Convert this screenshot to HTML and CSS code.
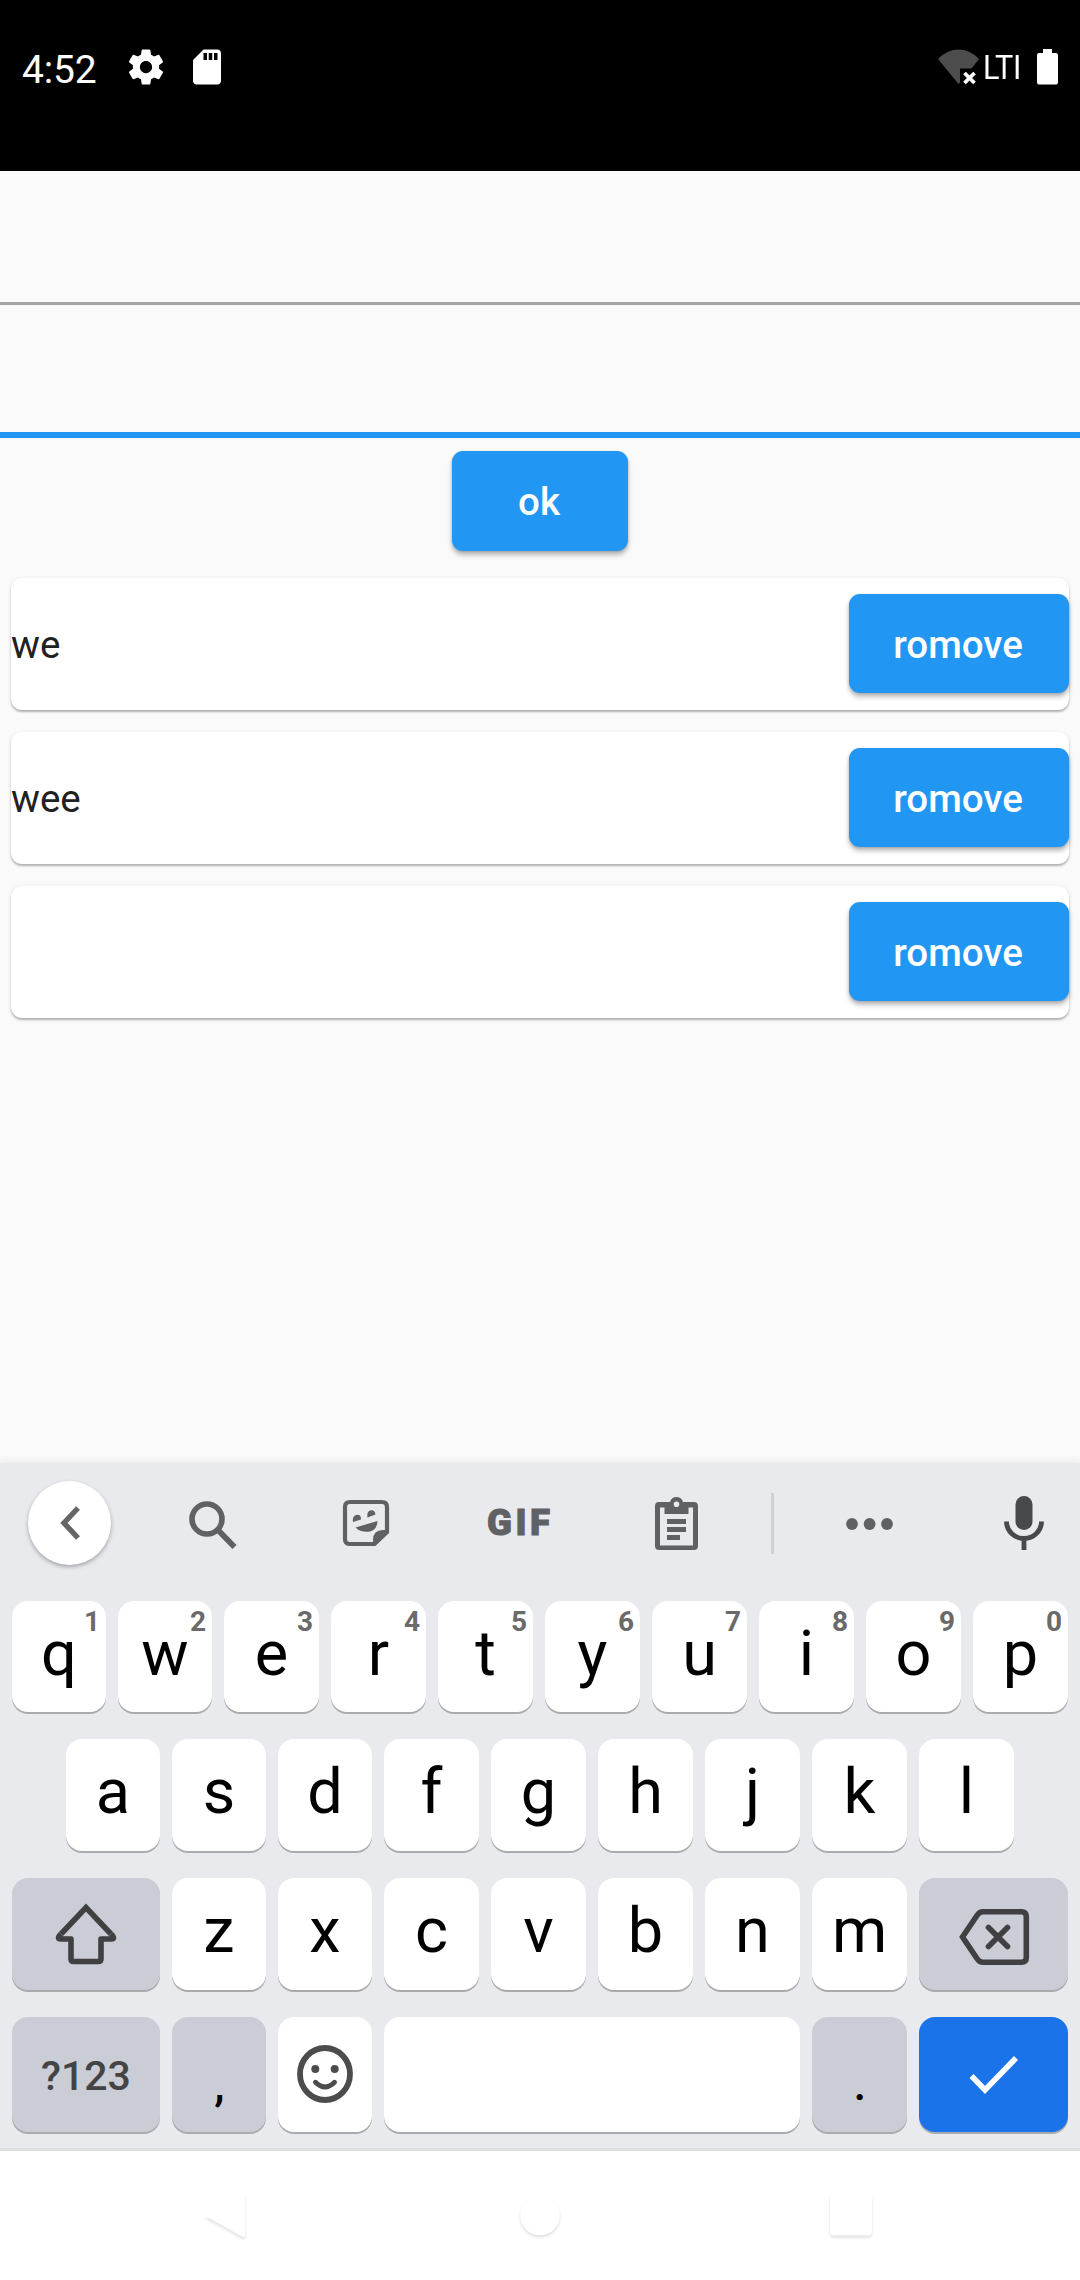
FILE: index.html
```html
<!DOCTYPE html>
<html lang="en">
<head>
<meta charset="utf-8">
<title>List</title>
<link rel="stylesheet" href="styles.css">
</head>
<body>
<header class="status">
  <span class="time">4:52</span>
  <svg class="gear" width="42" height="42" viewBox="0 0 24 24" fill="#fff"><path d="M19.43 12.98c.04-.32.07-.64.07-.98s-.03-.66-.07-.98l2.11-1.65c.19-.15.24-.42.12-.64l-2-3.46c-.12-.22-.39-.3-.61-.22l-2.49 1c-.52-.4-1.08-.73-1.69-.98l-.38-2.65C14.46 2.18 14.25 2 14 2h-4c-.25 0-.46.18-.49.42l-.38 2.65c-.61.25-1.17.59-1.69.98l-2.49-1c-.23-.09-.49 0-.61.22l-2 3.46c-.13.22-.07.49.12.64l2.11 1.65c-.04.32-.07.65-.07.98s.03.66.07.98l-2.11 1.65c-.19.15-.24.42-.12.64l2 3.46c.12.22.39.3.61.22l2.49-1c.52.4 1.08.73 1.69.98l.38 2.65c.03.24.24.42.49.42h4c.25 0 .46-.18.49-.42l.38-2.65c.61-.25 1.17-.59 1.69-.98l2.49 1c.23.09.49 0 .61-.22l2-3.46c.12-.22.07-.49-.12-.64l-2.11-1.65zM12 15.500c-1.930 0-3.500-1.570-3.500-3.500s1.570-3.500 3.500-3.500 3.500 1.570 3.500 3.500-1.570 3.500-3.500 3.500z"/></svg>
  <svg class="sd" width="42" height="42" viewBox="0 0 24 24" fill="#fff"><path d="M18 2h-8L4.02 8 4 20c0 1.1.9 2 2 2h12c1.1 0 2-.9 2-2V4c0-1.1-.9-2-2-2zm-6 6h-2V4h2v4zm3 0h-2V4h2v4zm3 0h-2V4h2v4z"/></svg>
  <svg class="wifi" width="42" height="36" viewBox="0 0 42 36"><path fill="#4d4d4d" d="M20.500 35 0 10Q9 .5 20.500.5T41 10L33.500 19.500H22V33.500Z"/><path stroke="#fff" stroke-width="3.800" d="m26.500 24 10 10m0-10-10 10"/></svg>
  <span class="lte">LTI</span>
  <svg class="battery" width="21" height="36" viewBox="0 0 21 36" fill="#fff"><path d="M6 0h9v4h4q2 0 2 2v27.500q0 2-2 2H2q-2 0-2-2V6q0-2 2-2h4z"/></svg>
</header>
<main class="page">
  <div class="field"></div>
  <div class="field focused"></div>
  <button class="btn ok">ok</button>
  <div class="card"><span>we</span><button class="btn">romove</button></div>
  <div class="card"><span>wee</span><button class="btn">romove</button></div>
  <div class="card"><span></span><button class="btn">romove</button></div>
</main>
<section class="keyboard">
  <div class="tools">
    <div class="back"><svg width="20" height="34" viewBox="0 0 20 34" fill="none" stroke="#666" stroke-width="5.400"><path d="M18 2 4 17l14 15"/></svg></div>
    <svg class="search" width="48" height="48" viewBox="0 0 48 48" fill="none" stroke="#606164"><circle cx="18" cy="18" r="15" stroke-width="5.600"/><path d="m29 29 16.500 17" stroke-width="5.800"/></svg>
    <svg class="sticker" width="46" height="46" viewBox="0 0 46 46" fill="#606164"><path fill="none" stroke="#606164" stroke-width="4.200" d="M7 2h32q5 0 5 5v25L31.500 44H7q-5 0-5-5V7q0-5 5-5z"/><path d="M30 45v-5q0-10 10-10h5v3L33 45z"/><path d="M10 22q-1-6 3.500-7t4.500 4.500zM24.500 17.500q-1-6 3-7t5 4zM12.500 27.500 34.500 21q-.5 9-7.500 10.500-9 1.500-14.500-4z"/></svg>
    <span class="gif">GIF</span>
    <svg class="clip" width="43" height="53" viewBox="0 0 43 53" fill="#606164"><path fill-rule="evenodd" d="M4 5h11q1.500-5 6.500-5T28 5h11q4 0 4 4v40q0 4-4 4H4q-4 0-4-4V9q0-4 4-4zm1 5.500v38h33v-38h-4.500V17h-24v-6.500zM21.500 4.500a2.800 2.800 0 1 0 0 5.600 2.800 2.800 0 1 0 0-5.600zM12 22h19v5H12zm0 8h19v5H12zm0 8h13v5H12z"/></svg>
    <div class="divider"></div>
    <svg class="dots" width="48" height="12" viewBox="0 0 48 12" fill="#606164"><circle cx="6" cy="6" r="5.900"/><circle cx="23.600" cy="6" r="5.900"/><circle cx="41" cy="6" r="5.900"/></svg>
    <svg class="mic" width="40" height="54" viewBox="0 0 40 54"><rect x="11.500" y="0" width="17" height="34" rx="8.500" fill="#48494c"/><path d="M2.500 25.500a17.500 17 0 0 0 35 0M20 43v11" fill="none" stroke="#48494c" stroke-width="4.800"/></svg>
  </div>
  <div class="row r1">
    <div class="key">q<sup>1</sup></div><div class="key">w<sup>2</sup></div><div class="key">e<sup>3</sup></div><div class="key">r<sup>4</sup></div><div class="key">t<sup>5</sup></div><div class="key">y<sup>6</sup></div><div class="key">u<sup>7</sup></div><div class="key">i<sup>8</sup></div><div class="key">o<sup>9</sup></div><div class="key">p<sup>0</sup></div>
  </div>
  <div class="row r2">
    <div class="key">a</div><div class="key">s</div><div class="key">d</div><div class="key">f</div><div class="key">g</div><div class="key">h</div><div class="key">j</div><div class="key">k</div><div class="key">l</div>
  </div>
  <div class="row r3">
    <div class="key gray"><svg width="62" height="62" viewBox="0 0 62 62" fill="none" stroke="#404042" stroke-width="5.600"><path stroke-linejoin="miter" d="M6 31 31 4.500 56 31"/><path stroke-linejoin="round" d="M6 31q-5 5 0 5H16v20q0 2.500 2.500 2.500h25q2.500 0 2.500-2.500V36H56q5 0 0-5"/></svg></div>
    <div class="key">z</div><div class="key">x</div><div class="key">c</div><div class="key">v</div><div class="key">b</div><div class="key">n</div><div class="key">m</div>
    <div class="key gray"><svg class="del" width="70" height="56" viewBox="0 0 70 56" fill="none" stroke="#404042" stroke-width="5.600"><path stroke-linejoin="miter" d="M24 2.700h38.500q4.800 0 4.800 4.800v41q0 4.800-4.800 4.800H24q-3.500 0-5.500-3L3.500 28l15-22.300q2-3 5.500-3z"/><path stroke-linecap="round" d="m29.500 18.500 19 19m0-19-19 19"/></svg></div>
  </div>
  <div class="row r4">
    <div class="key gray sym">?123</div>
    <div class="key gray punct">,</div>
    <div class="key"><svg class="smile" width="56" height="58" viewBox="0 0 56 58" fill="none" stroke="#4c4c4c"><ellipse cx="28" cy="29" rx="25" ry="26" stroke-width="5.800"/><path stroke-width="5" stroke-linecap="round" d="M18.500 37.300q9.500 9.500 19 0"/><g fill="#4c4c4c" stroke="none"><circle cx="18.300" cy="24" r="4"/><circle cx="37.700" cy="24" r="4"/></g></svg></div>
    <div class="key"></div>
    <div class="key gray punct">.</div>
    <div class="key enter"><svg width="50" height="38" viewBox="0 0 50 38" fill="none" stroke="#fff" stroke-width="5.600"><path d="m2.500 20 13.500 14L47 2"/></svg></div>
  </div>
</section>
<nav class="nav">
  <svg width="40" height="44" viewBox="0 0 40 44"><path d="M0 21.500 36 .5q3-1.500 3 2v37q0 3.500-3 2z"/></svg>
  <svg class="home" width="40" height="44" viewBox="0 0 40 44"><circle cx="20" cy="20.500" r="19.800"/></svg>
  <svg width="42" height="44" viewBox="0 0 42 44"><rect width="42" height="40.500" rx="4"/></svg>
</nav>
</body>
</html>
```

FILE: styles.css
```css
* { box-sizing: border-box; }
body {
  margin: 0;
  width: 1080px;
  height: 2280px;
  display: flex;
  flex-direction: column;
  overflow: hidden;
  background: #fafafa;
  font-family: Roboto, sans-serif;
}
svg { display: block; flex: none; overflow: visible; }

.status {
  flex: none;
  height: 171px;
  padding: 46px 22px 0;
  display: flex;
  align-items: flex-start;
  background: #000;
  color: #fff;
}
.time { width: 103px; font-size: 39px; line-height: 48px; letter-spacing: -.2px; }
.gear { margin-top: 0; }
.sd { margin: 0 0 0 19px; }
.wifi { margin: 3px 0 0 auto; }
.lte {
  width: 37px;
  margin: 2px 17px 0 3px;
  font-size: 34px;
  line-height: 38px;
  letter-spacing: -.3px;
  transform: scaleX(.9);
  transform-origin: 0 0;
}
.battery { margin-top: 3px; }

.page { flex: none; height: 1292px; }
.field { height: 134px; border-bottom: 3px solid #a5a5a5; }
.field.focused { height: 133px; border-bottom: 6px solid #2196f3; }
.btn {
  width: 220px;
  height: 99px;
  padding: 0 2px 0 0;
  border: 0;
  border-radius: 11px;
  background: #2196f3;
  color: #fff;
  font: 500 38.5px/99px Roboto, sans-serif;
  box-shadow: 0 4px 5px rgba(0, 0, 0, .25), 0 1px 3px rgba(0, 0, 0, .15);
}
.btn.ok { display: block; width: 176px; height: 100px; margin: 13px auto 27px; line-height: 101px; }
.card {
  height: 132px;
  margin: 0 11px 22px;
  display: flex;
  align-items: center;
  justify-content: space-between;
  border-radius: 11px;
  background: #fff;
  box-shadow: 0 2px 2px rgba(0, 0, 0, .24), 0 1px 4px rgba(0, 0, 0, .1);
  color: #212121;
  font-size: 38.5px;
}
.card .btn { margin-bottom: 1px; line-height: 101px; }

.keyboard {
  flex: none;
  height: 688px;
  border-bottom: 3px solid #dedfde;
  background: #e8eaed;
  box-shadow: 0 -2px 7px rgba(0, 0, 0, .07);
}
.tools { height: 120px; display: flex; align-items: center; padding-left: 28px; }
.back {
  width: 83px;
  height: 84px;
  display: flex;
  align-items: center;
  justify-content: center;
  border-radius: 50%;
  background: #fff;
  box-shadow: 0 2px 4px rgba(0, 0, 0, .3);
}
.search { margin: 3px 0 0 78px; }
.sticker { margin-left: 106px; }
.gif {
  width: 66px;
  margin: 0 0 0 98px;
  color: #606164;
  font-size: 36.5px;
  font-weight: 900;
  line-height: 44px;
  letter-spacing: 3.6px;
  -webkit-text-stroke: 1px #606164;
}
.clip { margin-left: 102px; }
.divider { width: 3px; height: 61px; margin-left: 73px; background: #cfd1d5; }
.dots { margin: 1px 0 0 72px; }
.mic { margin: -1px 0 0 110px; }

.row { display: grid; grid-template-rows: 100%; gap: 12px; padding: 0 12px; }
.r1 { margin-top: 18px; height: 111px; grid-template-columns: 94px 94px repeat(8, 95px); }
.r2 { margin-top: 27px; height: 112px; padding: 0 66px; grid-template-columns: repeat(3, 94px) repeat(6, 95px); }
.r3 { margin-top: 27px; height: 112px; grid-template-columns: 148px 94px 94px repeat(5, 95px) 149px; }
.r4 { margin-top: 27px; height: 115px; grid-template-columns: 148px 94px 94px 416px 95px 149px; }
.key {
  position: relative;
  display: flex;
  justify-content: center;
  border-radius: 16px;
  background: #fff;
  box-shadow: 0 2px 0 #a9abad;
  color: #000;
  font-size: 63px;
  line-height: 105px;
}
.key svg { align-self: center; }
.key sup {
  position: absolute;
  top: 5px;
  right: 6px;
  color: #6a6a6a;
  font-size: 28px;
  font-weight: 700;
  line-height: 32px;
}
.gray { background: #cbcdd6; }
.sym { color: #444; font-size: 41px; font-weight: 500; line-height: 118px; }
.punct { padding-left: 1px; font-size: 46px; font-weight: 500; line-height: 134px; }
.key .del { margin-top: 5px; }
.key .smile { margin-bottom: 2px; }
.enter { background: #1a73e8; }

.nav {
  flex: 1;
  display: flex;
  align-items: flex-start;
  padding: 44px 0 0 206px;
  background: #fff;
}
.nav .home { margin: 0 270px 0 274px; }
.nav svg { fill: #fff; filter: drop-shadow(0 2px 1.5px rgba(0, 0, 0, .13)); }
```
